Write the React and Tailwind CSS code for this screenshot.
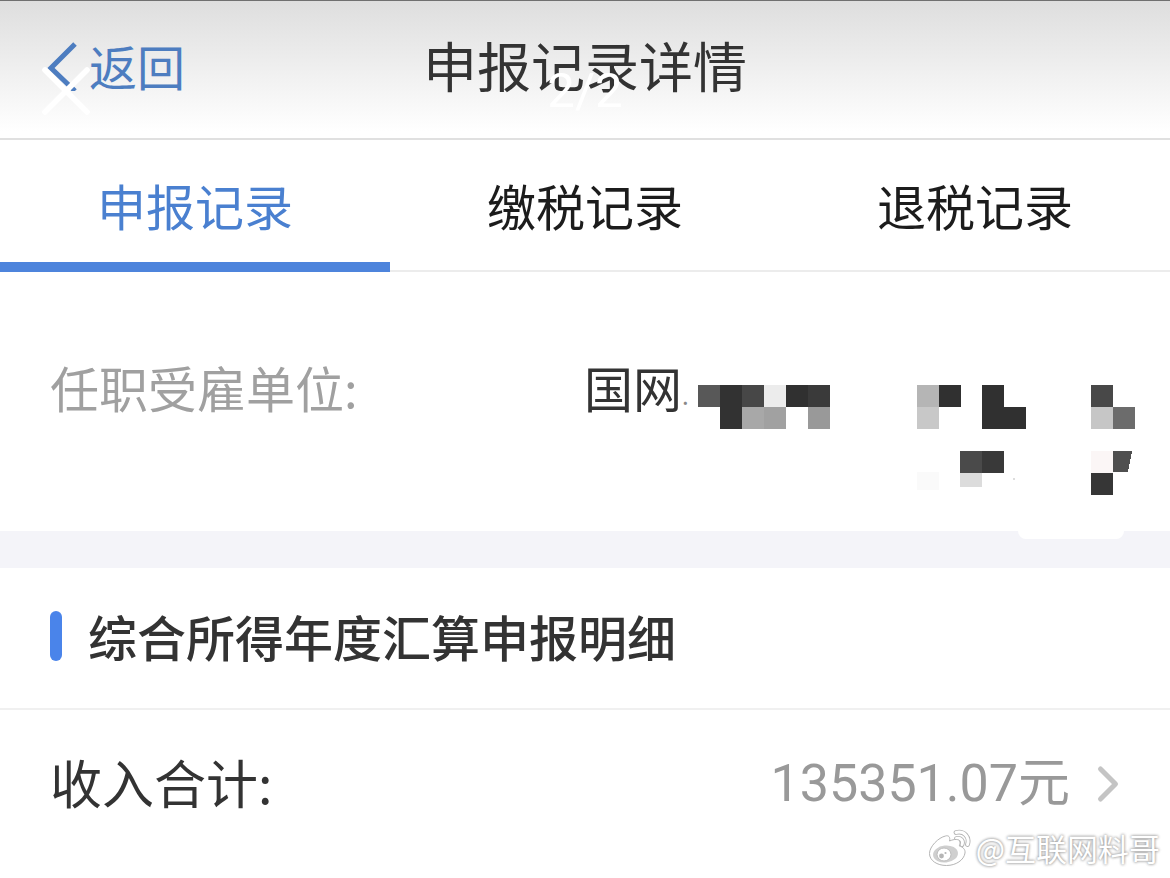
import { ChevronRight, X } from 'lucide-react';

const tabs = [
    { name: '申报记录', active: true },
    { name: '缴税记录', active: false },
    { name: '退税记录', active: false },
];

// Pixelated part of the company name, one entry per block
const blocks = [
    { x: 0, y: 0, fill: '#585858' },
    { x: 22, y: 0, h: 44, fill: '#323232' },
    { x: 44, y: 0, fill: '#474747' },
    { x: 66, y: 0, fill: '#ececec' },
    { x: 88, y: 0, fill: '#303030' },
    { x: 110, y: 0, fill: '#3a3a3a' },
    { x: 44, y: 22, fill: '#a8a8a8' },
    { x: 66, y: 22, fill: '#a1a1a1' },
    { x: 110, y: 22, fill: '#999999' },
    { x: 219, y: 0, fill: '#b5b5b5' },
    { x: 241, y: 0, fill: '#303030' },
    { x: 219, y: 22, fill: '#c8c8c8' },
    { x: 284, y: 0, h: 44, fill: '#303030' },
    { x: 306, y: 22, fill: '#303030' },
    { x: 393, y: 0, fill: '#484848' },
    { x: 393, y: 22, fill: '#c6c6c6' },
    { x: 415, y: 22, fill: '#6c6c6c' },
    { x: 219, y: 87, h: 18, fill: '#fafafa' },
    { x: 262, y: 66, fill: '#4a4a4a' },
    { x: 284, y: 66, fill: '#393939' },
    { x: 262, y: 88, h: 14, fill: '#dcdcdc' },
    { x: 393, y: 66, fill: '#fbf6f6' },
    { x: 393, y: 88, fill: '#363636' },
];

const Mosaic = () => (
    <svg width="438" height="110" viewBox="0 0 438 110" shapeRendering="crispEdges" aria-hidden="true">
        {blocks.map((b) => (
            <rect key={`${b.x}-${b.y}`} x={b.x} y={b.y} width="22" height={b.h || 22} fill={b.fill} />
        ))}
        <path d="M415 66h19l-4 21h-15z" fill="#4f4f4f" />
        <rect x="315" y="93" width="2" height="2" fill="#dddddd" />
    </svg>
);

const WeiboLogo = () => (
    <svg width="44" height="38" viewBox="0 0 44 38" aria-hidden="true">
        <g fill="none" strokeLinecap="round">
            <path d="M28 3.5C36 1.5 42 8 39.5 15.5M28.5 9.5C33 8.5 35.5 12 34 15.5" stroke="#b5b5b5" strokeWidth="4.8" />
            <path d="M28 3.5C36 1.5 42 8 39.5 15.5M28.5 9.5C33 8.5 35.5 12 34 15.5" stroke="#ffffff" strokeWidth="3" />
        </g>
        <path
            d="M17.5 7C20.5 6 22.5 8 21.5 12C26 10 31.5 9.5 32 13C32.3 14.6 31.5 16 31.3 17C35 18 37.5 20.5 37 24C36 31 28 36.500 18.500 36.500C9 36.500 1.500 31.500 1.500 24.500C1.500 17.500 10.500 8.500 17.500 7Z"
            fill="#ffffff"
            stroke="#b5b5b5"
        />
        <ellipse cx="17.5" cy="25" rx="12.5" ry="8.500" fill="#cfcfcf" transform="rotate(-6 17.5 25)" />
        <ellipse cx="16" cy="25.5" rx="7" ry="6.5" fill="#ffffff" stroke="#bdbdbd" />
        <circle cx="13.5" cy="27" r="2.4" fill="#b5b5b5" />
        <circle cx="17.5" cy="24" r="1.1" fill="#b5b5b5" />
    </svg>
);

const App = () => {
    return (
        <div className="relative min-h-screen overflow-hidden bg-white font-['Noto_Sans_CJK_SC',sans-serif] text-[#333333]">
            {/* Title bar */}
            <header className="relative flex h-[140px] items-start justify-center border-t border-b-2 border-t-[#707070] border-b-[#e0e0e0] bg-linear-to-b from-[#dedede] to-white to-95% pt-7">
                <a href="#back" className="absolute top-8 left-10 flex items-center text-[48px] leading-[64px] text-[#4d7dc0]">
                    <svg width="49" height="52" viewBox="0 0 49 52" fill="none" stroke="currentColor" strokeWidth="5" aria-hidden="true">
                        <path d="M35 5L11 29L35 52" />
                    </svg>
                    返回
                </a>
                <h1 className="text-[54px] leading-[72px]">申报记录详情</h1>
            </header>

            {/* Tabs */}
            <nav className="grid grid-cols-3 border-b-2 border-[#ececec]">
                {tabs.map((tab) => (
                    <button
                        key={tab.name}
                        type="button"
                        className={`-mb-[2px] h-[132px] border-b-10 pt-2 text-[49px] leading-[64px] ${
                            tab.active ? 'border-[#4d84dc] text-[#4a80d0]' : 'border-transparent text-[#1c1c1c]'
                        }`}
                    >
                        {tab.name}
                    </button>
                ))}
            </nav>

            {/* Employer */}
            <dl className="flex h-[259px] justify-between pt-[83px] pr-[34px] pl-[50px] text-[49px] leading-[64px]">
                <dt className="text-[#a0a0a0]">任职受雇单位:</dt>
                <dd className="flex items-start">
                    <span>国网</span>
                    <span className="w-4 text-2xl leading-[80px] text-[#888888]">.</span>
                    <span className="pt-[30px]">
                        <Mosaic />
                    </span>
                </dd>
            </dl>

            <div className="flex h-[37px] justify-end bg-[#f4f4f9] pr-[46px]">
                <div className="h-2 w-[106px] rounded-b-lg bg-white" />
            </div>

            {/* Declaration details */}
            <section>
                <div className="flex h-[142px] items-center gap-[26px] border-b-2 border-[#f0f0f0] pb-1 pl-[50px]">
                    <span className="h-[50px] w-3 rounded-md bg-[#4a84ea]" />
                    <h2 className="text-[49px] leading-[64px] font-medium">综合所得年度汇算申报明细</h2>
                </div>
                <button type="button" className="flex h-[144px] w-full items-center justify-between pr-8 pl-[50px] text-[52px] leading-[72px]">
                    <span>收入合计:</span>
                    <span className="flex items-center pt-1 font-[Roboto,'Noto_Sans_CJK_SC',sans-serif] text-[#999999]">
                        135351.07元
                        <ChevronRight size={60} strokeWidth={2} className="ml-2 text-[#c4c4c4]" />
                    </span>
                </button>
            </section>

            {/* Photo viewer controls */}
            <button type="button" aria-label="关闭" className="absolute top-[49px] left-6 text-white">
                <X size={84} strokeWidth={1.6} />
            </button>
            <div className="absolute inset-x-0 top-[59px] text-center font-[Roboto,sans-serif] text-[49px] leading-[64px] text-white">2/2</div>

            {/* Watermark */}
            <div className="absolute right-[10px] bottom-2 flex items-center gap-1 text-[31px] leading-[44px] text-white [text-shadow:0_0_3px_#999999,0_0_3px_#aaaaaa]">
                <WeiboLogo />
                @互联网料哥
            </div>
        </div>
    );
};

export default App;
